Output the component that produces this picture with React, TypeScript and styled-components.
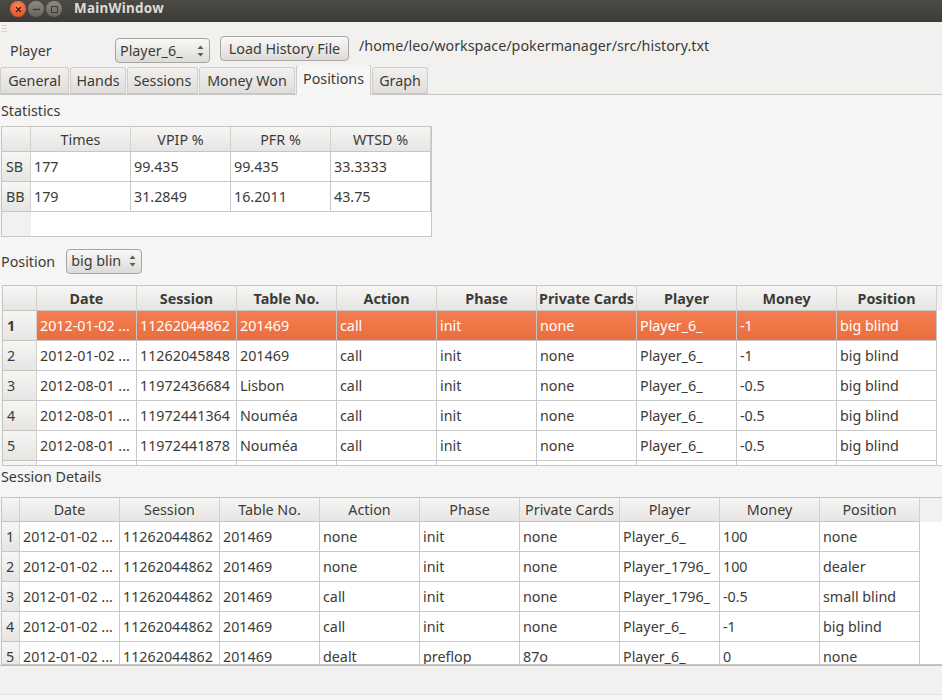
import React from "react";
import styled, { createGlobalStyle } from "styled-components";

const GlobalStyle = createGlobalStyle`
  html, body { margin: 0; padding: 0; background: #f2f1f0; }
  * { box-sizing: border-box; }
`;

const Window = styled.div`
  width: 942px;
  height: 700px;
  overflow: hidden;
  display: flex;
  flex-direction: column;
  background: #f2f1f0;
  color: #3c3b37;
  font-family: "Noto Sans", "Open Sans", sans-serif;
  font-size: 14.3px;
  line-height: 20px;
`;

const TitleBar = styled.div`
  height: 22px;
  flex: none;
  display: flex;
  align-items: flex-start;
  padding: 1px 0 0 10px;
  gap: 2px;
  background: linear-gradient(#4b4a45, #3c3b37);
`;

const WinButton = styled.div<{ $close?: boolean }>`
  width: 16px;
  height: 16px;
  border-radius: 50%;
  display: flex;
  align-items: center;
  justify-content: center;
  background: ${(p) =>
    p.$close
      ? "radial-gradient(circle at 50% 30%, #f5875a, #dd4a1f)"
      : "linear-gradient(#8e8c84, #65635c)"};
`;

const WinTitle = styled.div`
  margin: -3px 0 0 10px;
  color: #dfdbd2;
  font-weight: 700;
  font-size: 13.4px;
  letter-spacing: 0.3px;
`;

const ToolRow = styled.div`
  height: 43px;
  flex: none;
  position: relative;
  display: flex;
  align-items: flex-start;
  padding: 16px 0 0 10px;
  background: #f2f1f0;
`;

const Grip = styled.div`
  position: absolute;
  left: 2px;
  top: 3px;
  width: 5px;
  height: 8px;
  background: repeating-linear-gradient(#d0cfcc 0 1px, transparent 1px 3px);
`;

const PlayerLabel = styled.div`
  width: 105px;
  height: 24px;
  line-height: 26px;
`;

const Combo = styled.div<{ $w: number; $ml?: number }>`
  width: ${(p) => p.$w}px;
  height: 25px;
  margin-left: ${(p) => p.$ml ?? 0}px;
  flex: none;
  display: flex;
  align-items: center;
  padding-left: 4px;
  border: 1px solid #a8a6a0;
  border-radius: 4px;
  background: linear-gradient(#f8f8f7, #dcdbd8);
`;

const ComboText = styled.div`
  flex: 1;
  overflow: hidden;
  white-space: nowrap;
`;

const Spin = styled.svg`
  flex: none;
  margin: 0 4px 0 7px;
`;

const LoadButton = styled.div`
  width: 129px;
  height: 25px;
  margin: -2px 0 0 10px;
  flex: none;
  display: flex;
  align-items: center;
  justify-content: center;
  border: 1px solid #a8a6a0;
  border-radius: 4px;
  background: linear-gradient(#f8f8f7, #dedcd9);
`;

const PathText = styled.div`
  margin: -2px 0 0 10px;
  white-space: nowrap;
`;

const TabBar = styled.div`
  height: 30px;
  flex: none;
  display: flex;
  align-items: flex-end;
  gap: 1px;
  border-bottom: 1px solid #c8c7c4;
`;

const Tab = styled.div<{ $w: number; $active?: boolean }>`
  width: ${(p) => p.$w}px;
  height: ${(p) => (p.$active ? 31 : 27)}px;
  margin-bottom: ${(p) => (p.$active ? -1 : 0)}px;
  flex: none;
  display: flex;
  align-items: center;
  justify-content: center;
  padding-bottom: ${(p) => (p.$active ? 2 : 0)}px;
  border: 1px solid #cfcecb;
  border-bottom: ${(p) => (p.$active ? "none" : "1px solid #c8c7c4")};
  border-radius: 3px 3px 0 0;
  background: ${(p) =>
    p.$active ? "#f6f6f6" : "linear-gradient(#f1f0ef, #dfdedb)"};
`;

const Pane = styled.div`
  height: 571px;
  flex: none;
  display: flex;
  flex-direction: column;
  background: #f5f5f5;
  border-bottom: 1px solid #bdbcb9;
`;

const GroupLabel = styled.div<{ $h: number; $top: number }>`
  height: ${(p) => p.$h}px;
  flex: none;
  padding: ${(p) => p.$top}px 0 0 1px;
`;

const PositionRow = styled.div`
  height: 48px;
  flex: none;
  display: flex;
  align-items: center;
  padding-left: 1px;
`;

const PositionLabel = styled.div`
  padding-top: 1px;
`;

const TableBox = styled.div<{ $w: number; $h: number; $ml: number; $closed?: boolean }>`
  width: ${(p) => p.$w}px;
  height: ${(p) => p.$h}px;
  margin-left: ${(p) => p.$ml}px;
  flex: none;
  overflow: hidden;
  border: 1px solid #c6c5c2;
  border-right-width: ${(p) => (p.$closed ? 1 : 0)}px;
  background: #fff;
`;

const Row = styled.div<{ $h: number }>`
  display: flex;
  height: ${(p) => p.$h}px;
`;

const Corner = styled.div<{ $w: number }>`
  width: ${(p) => p.$w}px;
  flex: none;
  border-right: 1px solid #d2d1ce;
  border-bottom: 1px solid #c6c5c2;
  background: linear-gradient(#f6f6f5, #e6e5e3);
`;

const HeadCell = styled.div<{ $w: number; $bold?: boolean; $pad?: number }>`
  width: ${(p) => p.$w}px;
  flex: none;
  display: flex;
  align-items: center;
  justify-content: center;
  padding-top: ${(p) => p.$pad ?? 0}px;
  border-right: 1px solid #d2d1ce;
  border-bottom: 1px solid #c6c5c2;
  background: linear-gradient(#f6f6f5, #e6e5e3);
  font-weight: ${(p) => (p.$bold ? 700 : 400)};
  white-space: nowrap;
  overflow: hidden;
`;

const HeadFill = styled.div`
  flex: 1;
  background: #f2f1f0;
`;

const RowHead = styled.div<{ $w: number; $bold?: boolean }>`
  width: ${(p) => p.$w}px;
  flex: none;
  display: flex;
  align-items: center;
  padding-left: 4px;
  border-right: 1px solid #d2d1ce;
  border-bottom: 1px solid #c6c5c2;
  background: linear-gradient(#f6f6f5, #e6e5e3);
  font-weight: ${(p) => (p.$bold ? 700 : 400)};
`;

const RowHeadBlank = styled.div<{ $w: number }>`
  width: ${(p) => p.$w}px;
  flex: none;
  height: 100%;
  background: #f2f1f0;
`;

const Cell = styled.div<{ $w: number; $selected?: boolean }>`
  width: ${(p) => p.$w}px;
  flex: none;
  display: flex;
  align-items: center;
  padding-left: 3px;
  white-space: nowrap;
  overflow: hidden;
  border-right: 1px solid ${(p) => (p.$selected ? "#c6c5c2" : "#c9c9c9")};
  border-bottom: 1px solid #c9c9c9;
  color: ${(p) => (p.$selected ? "#fff" : "#3c3b37")};
  background: ${(p) =>
    p.$selected ? "linear-gradient(#f47e50, #ea6d3e)" : "#fff"};
`;

const RowFill = styled.div`
  flex: 1;
  background: #fff;
`;

const StatusBar = styled.div`
  flex: 1;
  display: flex;
  flex-direction: column;
  justify-content: flex-end;
`;

const StatusLine = styled.div`
  height: 6px;
  border-top: 1px solid #e4e3e1;
  background: #f5f5f4;
`;

const statHeads = ["Times", "VPIP %", "PFR %", "WTSD %"];
const statRows = [
  ["SB", "177", "99.435", "99.435", "33.3333"],
  ["BB", "179", "31.2849", "16.2011", "43.75"],
];

const heads = [
  "Date",
  "Session",
  "Table No.",
  "Action",
  "Phase",
  "Private Cards",
  "Player",
  "Money",
  "Position",
];

const d1 = "2012-01-02 ...";
const d2 = "2012-08-01 ...";
const handRows = [
  [d1, "11262044862", "201469", "call", "init", "none", "Player_6_", "-1", "big blind"],
  [d1, "11262045848", "201469", "call", "init", "none", "Player_6_", "-1", "big blind"],
  [d2, "11972436684", "Lisbon", "call", "init", "none", "Player_6_", "-0.5", "big blind"],
  [d2, "11972441364", "Nouméa", "call", "init", "none", "Player_6_", "-0.5", "big blind"],
  [d2, "11972441878", "Nouméa", "call", "init", "none", "Player_6_", "-0.5", "big blind"],
  ["", "", "", "", "", "", "", "", ""],
];

const sessionRows = [
  [d1, "11262044862", "201469", "none", "init", "none", "Player_6_", "100", "none"],
  [d1, "11262044862", "201469", "none", "init", "none", "Player_1796_", "100", "dealer"],
  [d1, "11262044862", "201469", "call", "init", "none", "Player_1796_", "-0.5", "small blind"],
  [d1, "11262044862", "201469", "call", "init", "none", "Player_6_", "-1", "big blind"],
  [d1, "11262044862", "201469", "dealt", "preflop", "87o", "Player_6_", "0", "none"],
];

const SpinIcon = () => (
  <Spin width="9" height="14" viewBox="0 0 9 14">
    <path d="M4.5 1.5 L7.5 5 H1.5 Z" fill="#5d5c58" />
    <path d="M4.5 12.5 L7.5 9 H1.5 Z" fill="#5d5c58" />
  </Spin>
);

type DataTableProps = {
  width: number;
  height: number;
  left: number;
  gutter: number;
  headHeight: number;
  rows: string[][];
  boldHead?: boolean;
  headPad?: number;
  selected?: number;
};

const DataTable = ({ width, height, left, gutter, headHeight, rows, boldHead, headPad, selected }: DataTableProps) => (
  <TableBox $w={width} $h={height} $ml={left}>
    <Row $h={headHeight}>
      <Corner $w={gutter} />
      {heads.map((h) => (
        <HeadCell key={h} $w={100} $bold={boldHead} $pad={headPad}>
          {h}
        </HeadCell>
      ))}
      <HeadFill />
    </Row>
    {rows.map((r, i) => (
      <Row key={i} $h={30}>
        <RowHead $w={gutter} $bold={selected === i}>
          {r[0] ? i + 1 : ""}
        </RowHead>
        {r.map((c, j) => (
          <Cell key={j} $w={100} $selected={selected === i}>
            {c}
          </Cell>
        ))}
        <RowFill />
      </Row>
    ))}
  </TableBox>
);

export default function App() {
  return (
    <Window>
      <GlobalStyle />
      <TitleBar>
        <WinButton $close>
          <svg width="7" height="7" viewBox="0 0 7 7">
            <path d="M1 1 L6 6 M6 1 L1 6" stroke="#4a1a0a" strokeWidth="1.2" />
          </svg>
        </WinButton>
        <WinButton>
          <svg width="9" height="3" viewBox="0 0 9 3">
            <path d="M1 1.5 H8" stroke="#3c3b37" strokeWidth="1.4" />
          </svg>
        </WinButton>
        <WinButton>
          <svg width="9" height="9" viewBox="0 0 9 9">
            <rect x="1.5" y="1.5" width="6" height="6" fill="none" stroke="#3c3b37" />
          </svg>
        </WinButton>
        <WinTitle>MainWindow</WinTitle>
      </TitleBar>
      <ToolRow>
        <Grip />
        <PlayerLabel>Player</PlayerLabel>
        <Combo $w={95}>
          <ComboText>Player_6_</ComboText>
          <SpinIcon />
        </Combo>
        <LoadButton>Load History File</LoadButton>
        <PathText>/home/leo/workspace/pokermanager/src/history.txt</PathText>
      </ToolRow>
      <TabBar>
        <Tab $w={69}>General</Tab>
        <Tab $w={56}>Hands</Tab>
        <Tab $w={71}>Sessions</Tab>
        <Tab $w={96}>Money Won</Tab>
        <Tab $w={75} $active>
          Positions
        </Tab>
        <Tab $w={56}>Graph</Tab>
      </TabBar>
      <Pane>
        <GroupLabel $h={31} $top={6}>
          Statistics
        </GroupLabel>
        <TableBox $w={431} $h={111} $ml={1} $closed>
          <Row $h={25}>
            <Corner $w={29} />
            {statHeads.map((h) => (
              <HeadCell key={h} $w={100} $pad={2}>
                {h}
              </HeadCell>
            ))}
          </Row>
          {statRows.map((r) => (
            <Row key={r[0]} $h={30}>
              <RowHead $w={29}>{r[0]}</RowHead>
              {r.slice(1).map((c, j) => (
                <Cell key={j} $w={100}>
                  {c}
                </Cell>
              ))}
            </Row>
          ))}
          <Row $h={24}>
            <RowHeadBlank $w={29} />
          </Row>
        </TableBox>
        <PositionRow>
          <PositionLabel>Position</PositionLabel>
          <Combo $w={76} $ml={11}>
            <ComboText>big blind</ComboText>
            <SpinIcon />
          </Combo>
        </PositionRow>
        <DataTable width={940} height={181} left={2} gutter={34} headHeight={25} rows={handRows} boldHead headPad={2} selected={0} />
        <GroupLabel $h={31} $top={1}>
          Session Details
        </GroupLabel>
        <DataTable width={941} height={168} left={1} gutter={18} headHeight={24} rows={sessionRows} />
      </Pane>
      <StatusBar>
        <StatusLine />
      </StatusBar>
    </Window>
  );
}
